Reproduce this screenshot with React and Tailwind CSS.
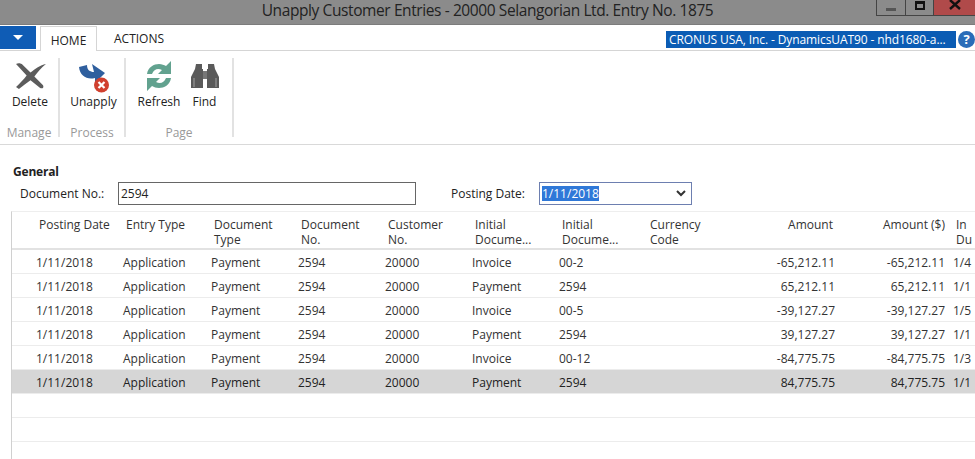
import React from "react";

const font = { fontFamily: '"Open Sans", "Noto Sans", sans-serif' };

const rows = [
  ["Invoice", "00-2", "-65,212.11", "1/4"],
  ["Payment", "2594", "65,212.11", "1/1"],
  ["Invoice", "00-5", "-39,127.27", "1/5"],
  ["Payment", "2594", "39,127.27", "1/1"],
  ["Invoice", "00-12", "-84,775.75", "1/3"],
  ["Payment", "2594", "84,775.75", "1/1"],
];

const cols = "grid grid-cols-[87px_88px_87px_87px_87px_87px_88px_89px_99px_110px_8px_40px]";

function DeleteIcon() {
  return (
    <svg width="33" height="27" viewBox="0 0 34 28">
      <path d="M2 2 C4 1 7 1 9 3 L17 11 C22 7 27 3 33 2 C28 6 24 11 21 15 L30 24 C31 26 30 28 27 27 L17 19 C13 22 9 25 5 28 L2 26 C6 22 10 18 13 14 Z" fill="#5c5c5c" />
    </svg>
  );
}

function UnapplyIcon() {
  return (
    <svg className="mt-[4px]" width="32" height="30" viewBox="0 0 32 30">
      <path d="M1 4 L9 2 C9 7 12 9 16 9 L14 1 L27 10 L17 20 L17 15 C9 17 2 13 1 4 Z" fill="#2f5f9e" />
      <circle cx="23.5" cy="22" r="7.5" fill="#d0402f" />
      <path d="M20.5 19 L26.5 25 M26.5 19 L20.5 25" stroke="#fff" strokeWidth="2.2" />
    </svg>
  );
}

function RefreshIcon() {
  return (
    <svg width="30" height="32" viewBox="0 0 30 32">
      <path d="M3 14 C4 7 10 4 15 4 C18 4 20 5 22 6 L27 1 L27 14 L14 14 L18 10 C14 8 10 9 8 14 Z" fill="#62a28f" />
      <path d="M27 18 C26 25 20 28 15 28 C12 28 10 27 8 26 L3 31 L3 18 L16 18 L12 22 C16 24 20 23 22 18 Z" fill="#62a28f" />
    </svg>
  );
}

function FindIcon() {
  return (
    <svg width="30" height="26" viewBox="0 0 30 26">
      <path d="M6 1 L12 1 L12 6 L13 6 L13 25 L1 25 L1 14 L5 6 Z" fill="#5a5a5a" />
      <path d="M18 1 L24 1 L25 6 L29 14 L29 25 L17 25 L17 6 L18 6 Z" fill="#5a5a5a" />
      <rect x="13" y="8" width="4" height="8" fill="#777" />
      <path d="M4 15 L4 24 M26 15 L26 24" stroke="#8a8a8a" strokeWidth="1.5" />
    </svg>
  );
}

function RibbonButton({ icon, label, className }) {
  return (
    <div className={`flex flex-col items-center ${className}`}>
      <div className="h-[35px] flex items-center justify-center">{icon}</div>
      <span className="text-[12px] leading-4 mt-[1px] text-[#222]">{label}</span>
    </div>
  );
}

function RibbonGroup({ label, width, children }) {
  return (
    <div className={`flex flex-col border-r-2 border-[#e2e2e2] h-[79px] ${width}`}>
      <div className="flex h-[67px] shrink-0">{children}</div>
      <div className="h-4 shrink-0 text-[12px] leading-4 text-[#999] text-center">{label}</div>
    </div>
  );
}

export default function App() {
  return (
    <div style={font} className="w-[975px] h-[459px] overflow-hidden bg-white text-[12px] text-[#333]">
      {/* title bar */}
      <div className="grid grid-cols-[1fr_auto_1fr] h-[25px] bg-[#8b8b8b] border-b border-[#7c7c7c]">
        <div />
        <div className="text-[15.5px] leading-[20px] text-[#222] tracking-[-0.4px] whitespace-nowrap">
          Unapply Customer Entries - 20000 Selangorian Ltd. Entry No. 1875
        </div>
        <div className="flex justify-end">
          <div className="flex h-[16px] w-[99px]">
            <div className="w-[30px] border border-t-0 border-[#444] flex items-center justify-center">
              <div className="w-[10px] h-[3px] bg-[#555] mt-[3px]" />
            </div>
            <div className="w-[28px] border-b border-r border-[#444] flex items-start justify-center pt-[1px]">
              <div className="w-[10px] h-[9px] border-2 border-t-[3px] border-[#111]" />
            </div>
            <div className="flex-1 bg-[#b04a4a] border-b border-[#444] flex items-start justify-center">
              <svg width="12" height="10" viewBox="0 0 12 10">
                <path d="M1 0 L11 9 M11 0 L1 9" stroke="#111" strokeWidth="2.4" />
              </svg>
            </div>
          </div>
        </div>
      </div>

      {/* tab row */}
      <div className="flex items-end h-[26px] border-b border-[#d5d5d5]">
        <div className="w-[36px] h-[23px] mb-[1px] bg-[#0f5cb5] flex items-center justify-center">
          <div className="w-0 h-0 border-l-[5px] border-r-[5px] border-t-[5px] border-l-transparent border-r-transparent border-t-white" />
        </div>
        <div className="ml-[4px] w-[57px] h-[25px] -mb-[1px] bg-white border border-b-0 border-[#d5d5d5] text-center leading-[27px] text-[#222]">
          HOME
        </div>
        <div className="ml-[17px] h-[25px] leading-[28px] text-[#222]">ACTIONS</div>
        <div className="ml-auto flex items-center h-[17px] mb-[2px]">
          <div className="w-[290px] h-[17px] bg-[#0b5cb4] text-white leading-[17px] pl-[3px] whitespace-nowrap overflow-hidden tracking-[-0.1px]">
            CRONUS USA, Inc. - DynamicsUAT90 - nhd1680-a...
          </div>
          <div className="w-[17px] h-[17px] ml-[2px] rounded-full bg-[#2a6cb8] text-white font-bold text-[13px] leading-[17px] text-center">
            ?
          </div>
        </div>
      </div>

      {/* ribbon */}
      <div className="flex h-[94px] pt-[7px] border-b border-[#d9d9d9]">
        <RibbonGroup label="Manage" width="w-[60px]">
          <RibbonButton icon={<DeleteIcon />} label="Delete" className="w-[60px] pl-[2px]" />
        </RibbonGroup>
        <RibbonGroup label="Process" width="w-[66px]">
          <RibbonButton icon={<UnapplyIcon />} label="Unapply" className="w-[66px] pl-[3px]" />
        </RibbonGroup>
        <RibbonGroup label="Page" width="w-[108px]">
          <RibbonButton icon={<RefreshIcon />} label="Refresh" className="w-[66px]" />
          <RibbonButton icon={<FindIcon />} label="Find" className="w-[25px]" />
        </RibbonGroup>
      </div>

      {/* general */}
      <div className="pl-[13px] pt-[19px] h-[66px]">
        <div className="font-bold text-[12px] leading-4 text-[#222] tracking-[-0.2px]">General</div>
        <div className="flex items-center h-[23px] mt-[2px]">
          <span className="w-[105px] pl-[7px] text-[#222]">Document No.:</span>
          <div className="w-[298px] h-[23px] border border-[#666] pl-[2px] leading-[21px] text-[#222]">2594</div>
          <span className="ml-[35px] w-[88px] text-[#222]">Posting Date:</span>
          <div className="w-[153px] h-[23px] border border-[#6d7fb0] flex items-center justify-between pl-[2px] pr-[5px]">
            <span className="bg-[#2f78d8] text-white h-[15px] leading-[15px]">1/11/2018</span>
            <svg width="10" height="7" viewBox="0 0 10 7">
              <path d="M1 1 L5 5 L9 1" fill="none" stroke="#333" strokeWidth="2" />
            </svg>
          </div>
        </div>
      </div>

      {/* table */}
      <div className="ml-[11px] border-l border-[#d0d0d0] border-t border-t-[#eeeeee] h-[248px] overflow-hidden">
        <div className={`${cols} pl-[24px] h-[38px] border-b-2 border-[#e2e2e2] leading-[15px] pt-[5px] text-[#333]`}>
          <div className="pl-[3px]">Posting Date</div>
          <div className="pl-[3px]">Entry Type</div>
          <div className="pl-[3px]">Document<br />Type</div>
          <div className="pl-[3px]">Document<br />No.</div>
          <div className="pl-[3px]">Customer<br />No.</div>
          <div className="pl-[3px]">Initial<br />Docume...</div>
          <div className="pl-[3px]">Initial<br />Docume...</div>
          <div className="pl-[3px]">Currency<br />Code</div>
          <div className="text-right pr-[2px]">Amount</div>
          <div className="text-right whitespace-nowrap">Amount ($)</div>
          <div />
          <div className="pl-[3px]">In<br />Du</div>
        </div>
        {rows.map((r, i) => (
          <div
            key={i}
            className={`${cols} pl-[24px] h-[24px] pt-[1px] leading-[23px] border-b border-[#ececec] ${i === 5 ? "bg-[#d6d6d6] text-[#222]" : ""}`}
          >
            <div>1/11/2018</div>
            <div>Application</div>
            <div>Payment</div>
            <div>2594</div>
            <div>20000</div>
            <div>{r[0]}</div>
            <div>{r[1]}</div>
            <div />
            <div className="text-right">{r[2]}</div>
            <div className="text-right">{r[2]}</div>
            <div />
            <div>{r[3]}</div>
          </div>
        ))}
        <div className="h-[24px] border-b border-[#ececec]" />
        <div className="h-[24px] border-b border-[#ececec]" />
      </div>
    </div>
  );
}
